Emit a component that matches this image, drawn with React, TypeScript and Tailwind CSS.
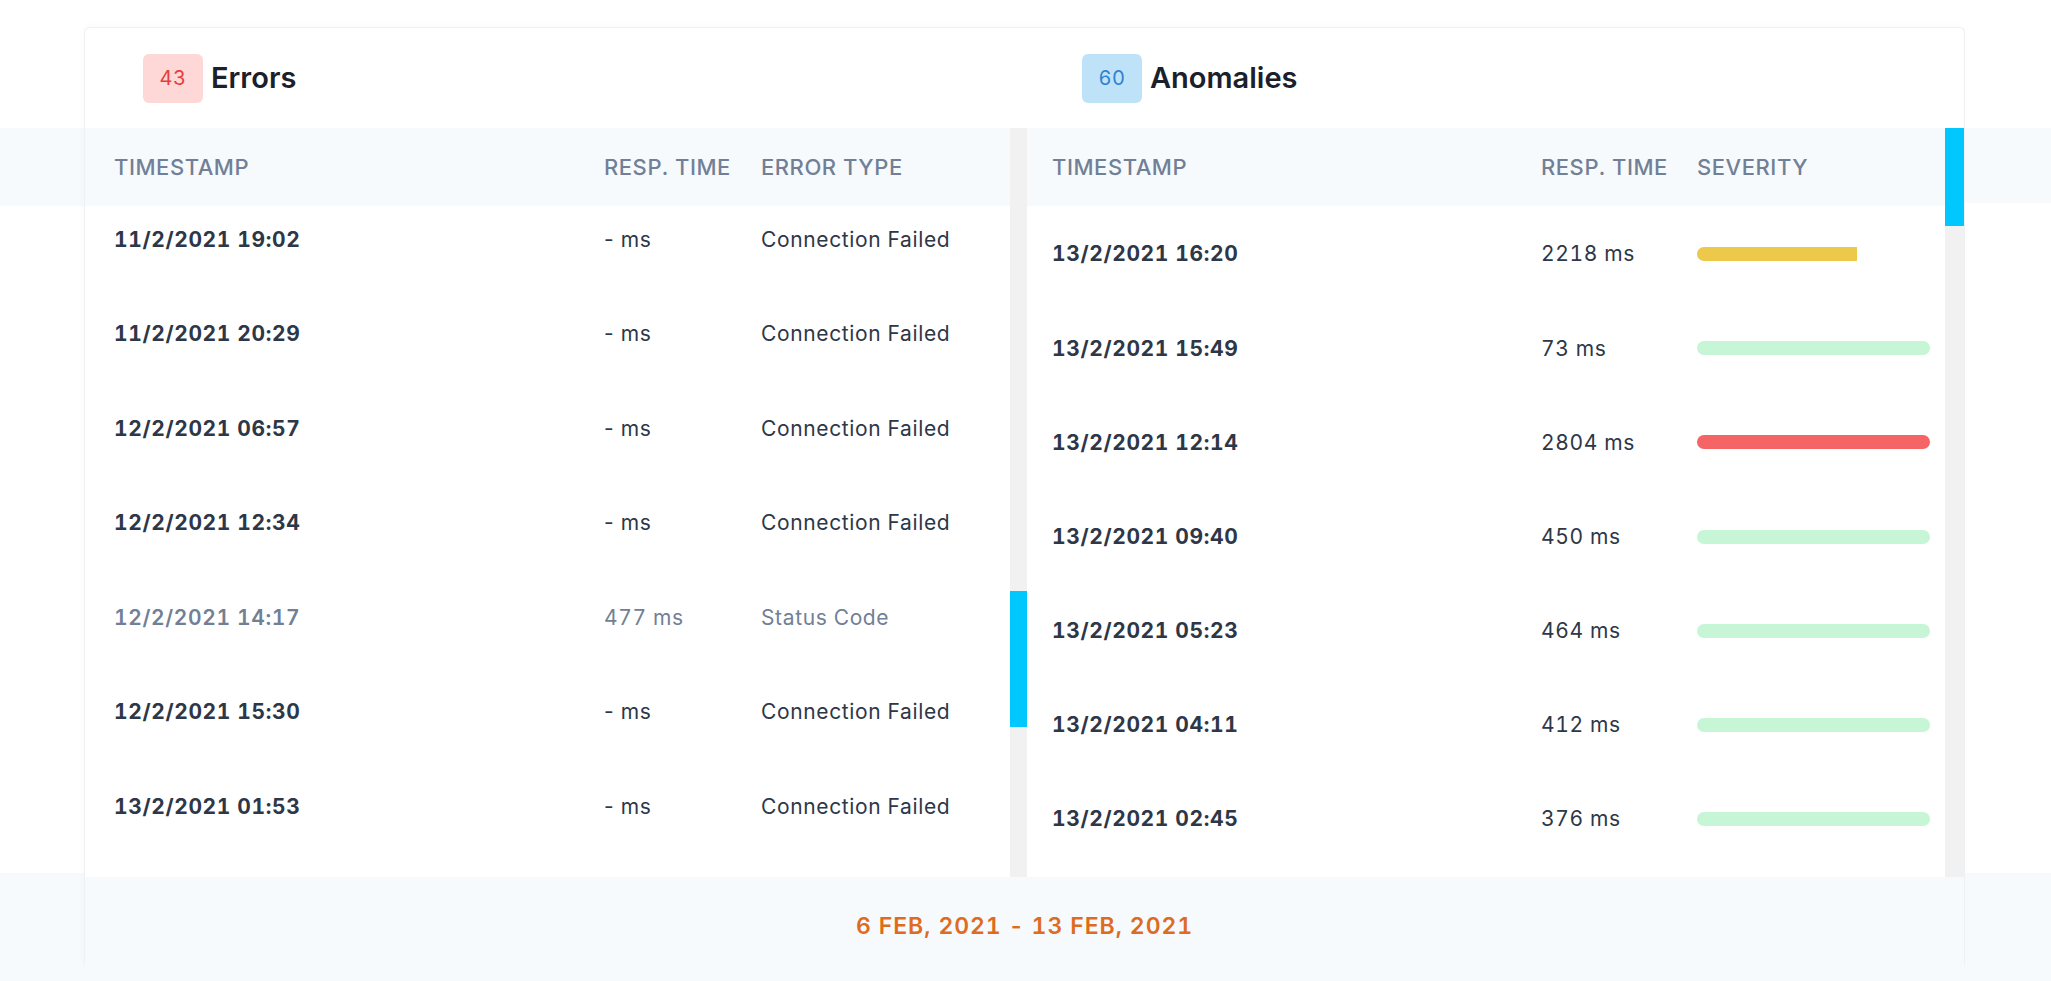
import React from "react";

type ErrorRow = { ts: string; resp: string; type: string; muted?: boolean };
type AnomalyRow = { ts: string; resp: string; level: "low" | "mid" | "high"; pct: number };

const errors: ErrorRow[] = [
  { ts: "11/2/2021 19:02", resp: "- ms", type: "Connection Failed" },
  { ts: "11/2/2021 20:29", resp: "- ms", type: "Connection Failed" },
  { ts: "12/2/2021 06:57", resp: "- ms", type: "Connection Failed" },
  { ts: "12/2/2021 12:34", resp: "- ms", type: "Connection Failed" },
  { ts: "12/2/2021 14:17", resp: "477 ms", type: "Status Code", muted: true },
  { ts: "12/2/2021 15:30", resp: "- ms", type: "Connection Failed" },
  { ts: "13/2/2021 01:53", resp: "- ms", type: "Connection Failed" },
];

const anomalies: AnomalyRow[] = [
  { ts: "13/2/2021 16:20", resp: "2218 ms", level: "mid", pct: 68.5 },
  { ts: "13/2/2021 15:49", resp: "73 ms", level: "low", pct: 100 },
  { ts: "13/2/2021 12:14", resp: "2804 ms", level: "high", pct: 100 },
  { ts: "13/2/2021 09:40", resp: "450 ms", level: "low", pct: 100 },
  { ts: "13/2/2021 05:23", resp: "464 ms", level: "low", pct: 100 },
  { ts: "13/2/2021 04:11", resp: "412 ms", level: "low", pct: 100 },
  { ts: "13/2/2021 02:45", resp: "376 ms", level: "low", pct: 100 },
];

const barColor = {
  low: "bg-[#c6f6d5] rounded-full",
  mid: "bg-[#ecc94b] rounded-l-full",
  high: "bg-[#f56565] rounded-full",
};

// 页面两侧的背景条
function Gutter({ className = "", band = "h-[78px]" }: { className?: string; band?: string }) {
  return (
    <div className={`flex flex-col ${className}`}>
      <div className="h-[128px] shrink-0 bg-white" />
      <div className={`${band} shrink-0 bg-[#f7fafc]`} />
      <div className="flex-1 bg-white" />
      <div className="h-[108px] shrink-0 bg-[#f7fafc]" />
    </div>
  );
}

function Scrollbar({ offset, size, className = "" }: { offset: string; size: string; className?: string }) {
  return (
    <div className={`flex shrink-0 flex-col bg-[#f1f1f1] ${className}`}>
      <div className={`${offset} shrink-0`} />
      <div className={`${size} shrink-0 bg-[#00c8ff]`} />
    </div>
  );
}

function Title({ count, label, tone }: { count: number; label: string; tone: "red" | "blue" }) {
  return (
    <div className="flex items-center gap-2">
      <span
        className={`flex h-[49px] w-[60px] items-center justify-center rounded-md text-[20px] tracking-wide tabular-nums ${
          tone === "red" ? "bg-[#fed7d7] text-[#e53e3e]" : "bg-[#bee3f8] text-[#3182ce]"
        }`}
      >
        {count}
      </span>
      <span className="text-[29px] font-semibold text-[#1a202c]">{label}</span>
    </div>
  );
}

export default function App() {
  return (
    <div
      className="flex h-[981px] w-[2051px] overflow-hidden bg-white tabular-nums"
      style={{ fontFamily: "Inter, 'Noto Sans', sans-serif" }}
    >
      <Gutter className="w-[84px] shrink-0" />

      <div className="flex w-[1881px] shrink-0 flex-col">
        <div className="h-[27px] shrink-0 bg-white" />
        <div className="flex h-[938px] shrink-0 flex-col rounded-t-md border border-b-0 border-[#eef0f3] bg-white shadow-[0_0_8px_rgba(0,0,0,0.03)]">
          {/* 标题 */}
          <div className="flex h-[100px] shrink-0">
            <div className="flex w-[942px] items-center pl-[58px]">
              <Title count={43} label="Errors" tone="red" />
            </div>
            <div className="flex flex-1 items-center pl-[55px]">
              <Title count={60} label="Anomalies" tone="blue" />
            </div>
          </div>

          {/* 表格 */}
          <div className="flex h-[749px] shrink-0">
            <div className="flex w-[925px] shrink-0 flex-col">
              <div className="grid h-[78px] shrink-0 grid-cols-[490px_157px_1fr] items-center bg-[#f7fafc] pl-[29px] text-[22px] font-medium uppercase tracking-wide text-[#718096]">
                <span>Timestamp</span>
                <span>Resp. Time</span>
                <span>Error Type</span>
              </div>
              <div className="flex-1 overflow-hidden">
                <div className="-mt-[14px]">
                  {errors.map((r) => (
                    <div
                      key={r.ts}
                      className={`grid h-[94.5px] grid-cols-[490px_157px_1fr] items-center pl-[29px] text-[21px] tracking-[0.03em] ${
                        r.muted ? "text-[#718096]" : "text-[#2d3748]"
                      }`}
                    >
                      <span className={r.muted ? "font-semibold" : "font-bold"}>{r.ts}</span>
                      <span className={r.resp.startsWith("-") ? "normal-nums" : ""}>{r.resp}</span>
                      <span>{r.type}</span>
                    </div>
                  ))}
                </div>
              </div>
            </div>
            <Scrollbar offset="h-[463px]" size="h-[136px]" className="w-[17px]" />

            <div className="flex w-[918px] shrink-0 flex-col">
              <div className="grid h-[78px] shrink-0 grid-cols-[489px_156px_1fr] items-center bg-[#f7fafc] pl-[25px] text-[22px] font-medium uppercase tracking-wide text-[#718096]">
                <span>Timestamp</span>
                <span>Resp. Time</span>
                <span>Severity</span>
              </div>
              <div className="flex-1 overflow-hidden">
                <div className="pt-[1px]">
                  {anomalies.map((r) => (
                    <div
                      key={r.ts}
                      className="grid h-[94.2px] grid-cols-[489px_156px_1fr] items-center pl-[25px] text-[21px] tracking-[0.03em] text-[#2d3748]"
                    >
                      <span className="font-bold">{r.ts}</span>
                      <span>{r.resp}</span>
                      <div className="w-[233px]">
                        <div className={`h-[14px] ${barColor[r.level]}`} style={{ width: `${r.pct}%` }} />
                      </div>
                    </div>
                  ))}
                </div>
              </div>
            </div>
            <Scrollbar offset="h-0" size="h-[98px]" className="w-[19px]" />
          </div>

          {/* 日期范围 */}
          <div className="flex flex-1 items-center justify-center bg-[#f7fafc] pt-[10px]">
            <span className="text-[23px] font-semibold uppercase tracking-[0.04em] text-[#dd6b20]">
              6 Feb, 2021 - 13 Feb, 2021
            </span>
          </div>
        </div>
        <div className="flex-1 bg-[#f7fafc]" />
      </div>

      <Gutter className="flex-1" band="h-[75px]" />
    </div>
  );
}
